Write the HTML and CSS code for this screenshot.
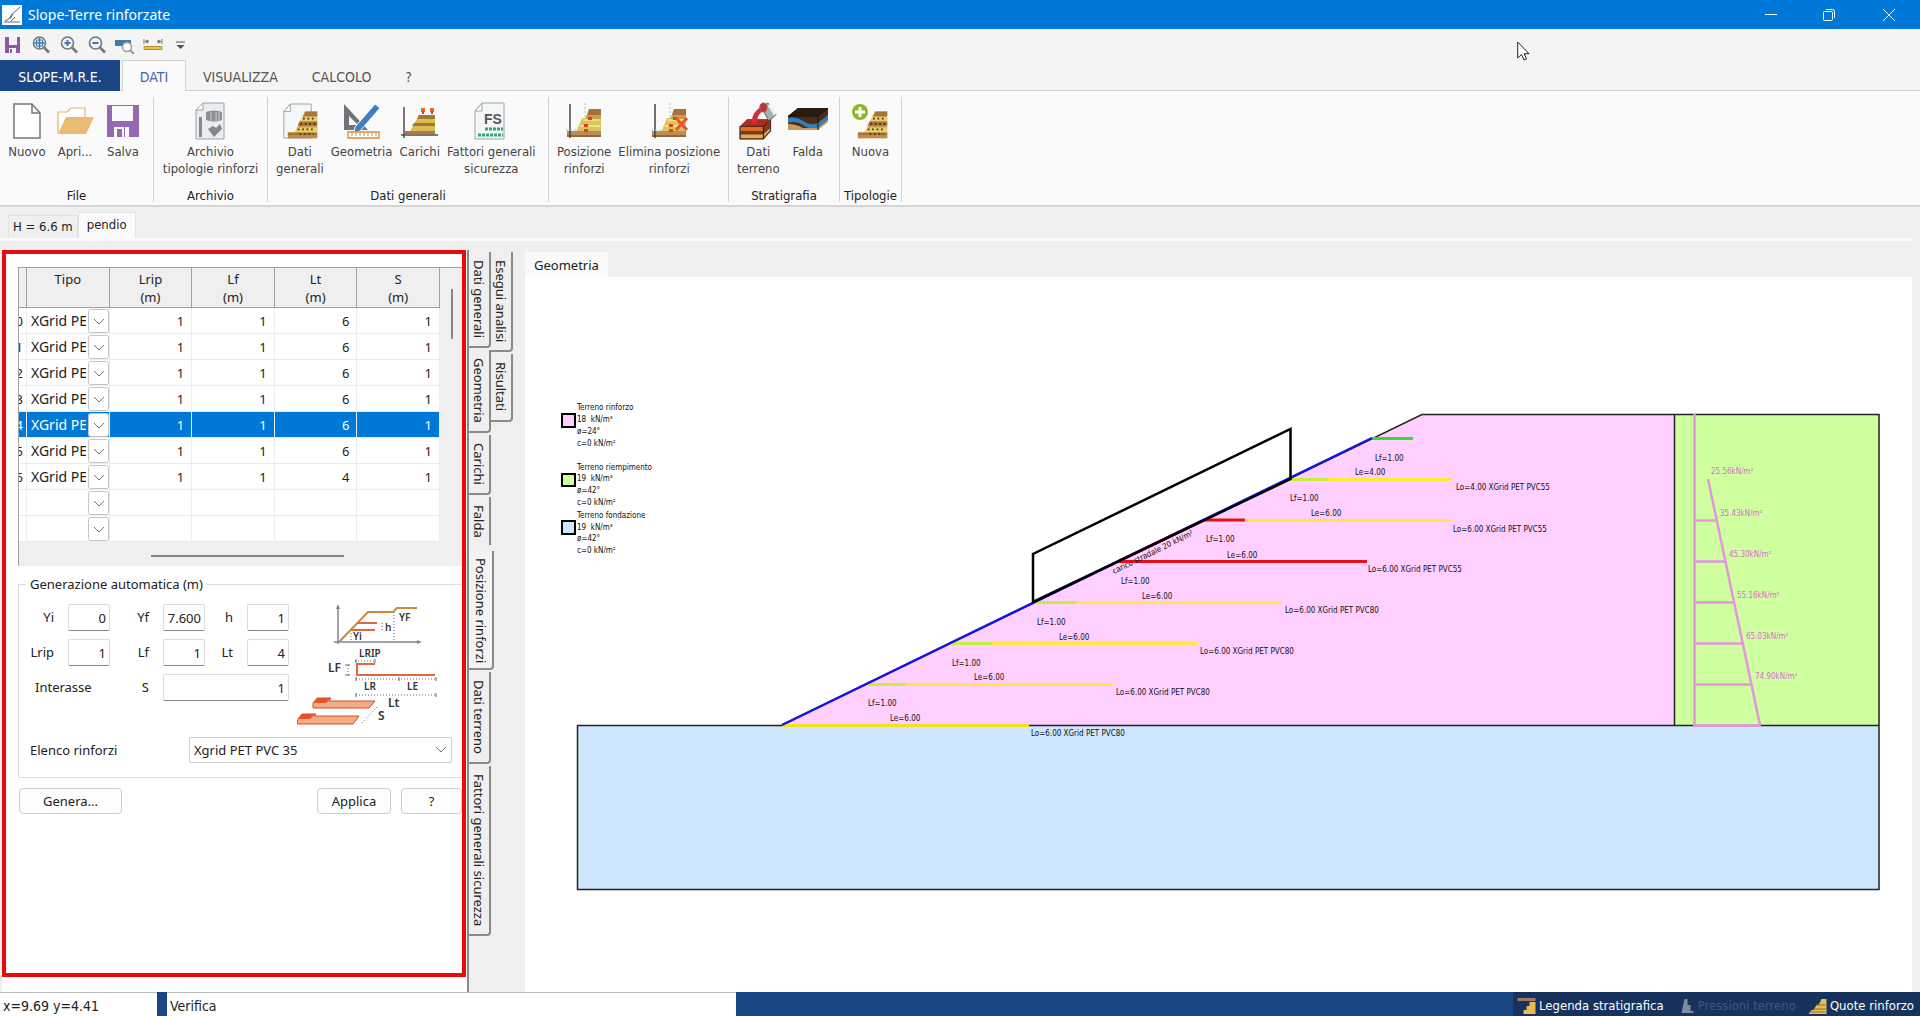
FILE: index.html
```html
<!DOCTYPE html>
<html lang="it">
<head>
<meta charset="utf-8">
<title>Slope-Terre rinforzate</title>
<link rel="stylesheet" href="styles.css">
</head>
<body>
<svg class="defs" aria-hidden="true">
  <symbol id="wall" viewBox="0 0 36 36">
    <path d="M1 27h8l11-23h14v30H1z" fill="#c9a04a"/>
    <path d="M21 4h13v5H19zM14 15h20v5H12zM1 28h33v3H1z" fill="#a5763c"/>
    <path d="M17 10h17v5H15zM11 22h23v5H9z" fill="#e6cf6a"/>
    <path d="M1 31h33v3H1z" fill="#c08a50"/>
    <path d="M18 12h14M15 18h17M12 24h20M14 29h16" stroke="#4a3518" stroke-width="2" stroke-dasharray="2 3"/>
  </symbol>
  <symbol id="axes-wall" viewBox="0 0 38 38">
    <path d="M12 28l5-12h4l3-9h12v23H10z" fill="#dcc45c"/>
    <path d="M24 7h12v6H22z" fill="#a8703e"/>
    <path d="M22 13h14v4H20z" fill="#c9a04a"/>
    <path d="M2 29h34v6H2z" fill="#c08a50"/>
    <path d="M2 34h34" stroke="#5b4a30"/>
    <path d="M5 2v34" stroke="#444" stroke-width="1.5"/>
    <path d="M20 1v14M1 28h35" stroke="#8fc6dc" stroke-dasharray="2 2"/>
    <path d="M15 24h20M18 18h16" stroke="#f0e08a" stroke-width="2"/>
    <path d="M19 22h4v3h-4zM23 15h4v3h-4zM19 27h4v3h-4z" fill="#e0401c"/>
  </symbol>
  <symbol id="page" viewBox="0 0 36 38">
    <path d="M10 1h22v36H3V9z" fill="#f4f7f8" stroke="#9aa4a8"/>
    <path d="M10 1v8H3z" fill="#fff" stroke="#9aa4a8"/>
  </symbol>
  <symbol id="lens" viewBox="0 0 18 18">
    <circle cx="7.500" cy="7" r="6" fill="#eef3f7" stroke="#777" stroke-width="1.600"/>
    <path d="M12 11.500l5 5" stroke="#777" stroke-width="2.600"/>
  </symbol>
</svg>

<header class="titlebar">
  <svg class="app-icon" viewBox="0 0 20 20"><path d="M0 0h20v20H0z" fill="#fff"/><path d="M3 16l4-2 3-5 5-4 3-3M2 17h16M8 14l3-5M13 12l-4 4" fill="none" stroke="#667" stroke-width="1"/></svg>
  <h1>Slope-Terre rinforzate</h1>
  <div class="window-buttons">
    <button aria-label="Riduci"><svg viewBox="0 0 12 12"><path d="M0 5.500h12" stroke="#fff"/></svg></button>
    <button aria-label="Ripristina"><svg viewBox="0 0 12 12"><path d="M.5 3.500q0-1 1-1h7q1 0 1 1v7q0 1-1 1h-7q-1 0-1-1zM3 .5h6.500q2 0 2 2V9" fill="none" stroke="#fff"/></svg></button>
    <button aria-label="Chiudi"><svg viewBox="0 0 12 12"><path d="M0 0l12 12M12 0L0 12" stroke="#fff"/></svg></button>
  </div>
</header>

<div class="quick-bar">
  <button aria-label="Salva"><svg viewBox="0 0 18 18"><path d="M1 1h4v8h8V1h3v16H1z" fill="#8a5aa8"/><path d="M5 12h7v5H5z" fill="#f6f4f8"/><path d="M6 13h2v4H6z" fill="#8a5aa8"/></svg></button>
  <button aria-label="Zoom tutto"><svg viewBox="0 0 18 18"><use href="#lens"/><path d="M7.500 2v10M2.500 7h10" stroke="#3a78b8" stroke-width="1.500"/><path d="M4.500 4h6v6h-6z" fill="none" stroke="#3a78b8"/></svg></button>
  <button aria-label="Zoom avanti"><svg viewBox="0 0 18 18"><use href="#lens"/><path d="M7.500 4v6M4.500 7h6" stroke="#3a78b8" stroke-width="2"/></svg></button>
  <button aria-label="Zoom indietro"><svg viewBox="0 0 18 18"><use href="#lens"/><path d="M4.500 7h6" stroke="#3a78b8" stroke-width="2"/></svg></button>
  <button aria-label="Zoom finestra"><svg viewBox="0 0 20 18"><path d="M0 4h16v6H0z" fill="#3f7cab"/><circle cx="12" cy="11" r="4.500" fill="#fff" stroke="#999" stroke-width="1.500"/><path d="M15 14l4 4" stroke="#999" stroke-width="2"/></svg></button>
  <button aria-label="Misura"><svg viewBox="0 0 20 18"><path d="M1 10.500h18v3H1z" fill="#e8c44a" stroke="#b89030"/><path d="M1 3v5M19 3v5M2 5.500l3-1.500v3zM18 5.500l-3-1.500v3z" stroke="#777" fill="#777"/></svg></button>
  <button aria-label="Personalizza"><svg viewBox="0 0 18 18"><path d="M4 6h9" stroke="#555"/><path d="M4.500 9h8l-4 4z" fill="#555"/></svg></button>
</div>

<nav class="ribbon-tabs">
  <button class="ribbon-tab is-app">SLOPE-M.R.E.</button>
  <button class="ribbon-tab is-active">DATI</button>
  <button class="ribbon-tab">VISUALIZZA</button>
  <button class="ribbon-tab">CALCOLO</button>
  <button class="ribbon-tab">?</button>
</nav>

<section class="ribbon">
  <div class="group group-file">
    <div class="tools">
      <button class="tool"><svg viewBox="0 0 38 38"><path d="M6 2h18l8 9v25H6z" fill="#fff" stroke="#777" stroke-width="1.500"/><path d="M24 2v9h8" fill="none" stroke="#777" stroke-width="1.500"/></svg>Nuovo</button>
      <button class="tool"><svg viewBox="0 0 38 38"><path d="M2 31V10h9l4-4h14v9" fill="#fdfdfd" stroke="#e3b56e" stroke-width="1.200"/><path d="M10 15h28l-8 17H2z" fill="#e8bc74"/></svg>Apri...</button>
      <button class="tool"><svg viewBox="0 0 38 38"><path d="M3 3h32v32H3z" fill="#9668b4"/><path d="M8 4h21v15H8zM10 25h15v10H10z" fill="#fbf9fc"/><path d="M13 27h5v8h-5zM20 25h1v10h-1z" fill="#9668b4"/></svg>Salva</button>
    </div>
    <h2>File</h2>
  </div>
  <div class="group group-archive">
    <div class="tools">
      <button class="tool"><svg viewBox="0 0 38 38"><path d="M11 1h21v36H4V8z" fill="#e9edf0" stroke="#9aa4a8"/><path d="M11 1v7H4z" fill="#fff" stroke="#9aa4a8"/><path d="M7 15h3v20H7z" fill="#888"/><path d="M14 10q8-3 16 0v8q-8 3-16 0z" fill="#8b9095"/><path d="M19 10v9M24 10v9M27 10v9" stroke="#c9ced2"/><path d="M16 27l5-3 3 2 4-4 2 5-8 8z" fill="#83888d"/></svg>Archivio<br>tipologie rinforzi</button>
    </div>
    <h2>Archivio</h2>
  </div>
  <div class="group group-data">
    <div class="tools">
      <button class="tool"><svg viewBox="0 0 38 38"><use href="#page" width="34" height="38"/><use href="#wall" x="6" y="6" width="32" height="32"/></svg>Dati<br>generali</button>
      <button class="tool"><svg viewBox="0 0 38 38"><path d="M1 2l24 26H1z" fill="#707478"/><path d="M6 14l9 9H6z" fill="#fafafa"/><path d="M12 25l20-23 5 4-20 23-6 2z" fill="#3f7fbf" stroke="#fafafa"/><path d="M5 30h31v6H5z" fill="#fff" stroke="#d98a3c" stroke-width="1.300"/><path d="M9 31v3M13 31v3M17 31v3M21 31v3M25 31v3M29 31v3M33 31v3" stroke="#d98a3c"/></svg>Geometria</button>
      <button class="tool"><svg viewBox="0 0 38 38"><path d="M11 26l7-13h16v18H8z" fill="#d9bc52"/><path d="M18 13h16v4H16zM13 21h21v3H11z" fill="#a07a34"/><path d="M4 29h30v3H4z" fill="#b07a48"/><path d="M3 5v31M0 33h37" stroke="#554a40" stroke-width="1.500"/><path d="M20 6h4v4h-4zM29 6h4v4h-4z" fill="#ee6a1c"/><path d="M22 9v3M31 9v3" stroke="#e03a18" stroke-width="2"/></svg>Carichi</button>
      <button class="tool"><svg viewBox="0 0 38 38"><use href="#page" width="36" height="38"/><text x="12" y="22" class="fs-text">FS</text><path d="M13 27h18M6 33h25" stroke="#35a374" stroke-width="3" stroke-dasharray="3 1"/></svg>Fattori generali<br>sicurezza</button>
    </div>
    <h2>Dati generali</h2>
  </div>
  <div class="group group-position">
    <div class="tools">
      <button class="tool"><svg viewBox="0 0 38 38"><use href="#axes-wall"/></svg>Posizione<br>rinforzi</button>
      <button class="tool"><svg viewBox="0 0 38 38"><use href="#axes-wall"/><path d="M26 16l11 12M37 16L26 28" stroke="#f0542c" stroke-width="3"/></svg>Elimina posizione<br>rinforzi</button>
    </div>
  </div>
  <div class="group group-strata">
    <div class="tools">
      <button class="tool"><svg viewBox="0 0 42 42"><path d="M1 27l8-8h26v13l-8 9H1z" fill="#7d3a1c"/><path d="M1 27l8-8h26l-8 8z" fill="#b32a1c"/><path d="M1 27h26v5H1z" fill="#d8702c"/><path d="M2 36h25l7-7v3l-8 8H2z" fill="#dcae5c"/><path d="M1 27h26v14H1zM27 27l8-8v13l-8 9z" fill="none" stroke="#3a1c10"/><path d="M14 24q0-15 14-20l-3 7q-6 5-5 14z" fill="#d23030"/><path d="M25 6l7-5 9 13-8 7z" fill="#a9b0b4" stroke="#555"/><path d="M33 3l7 11" stroke="#f2f2f2" stroke-width="3"/><ellipse cx="27" cy="6" rx="4" ry="5" fill="#c63030" stroke="#777"/></svg>Dati<br>terreno</button>
      <button class="tool"><svg viewBox="0 0 42 38" class="wide"><path d="M1 14l10-8h30v12l-10 8v1H1z" fill="#4a2c18"/><path d="M1 14l10-8h30l-10 8z" fill="#2b1c12"/><path d="M1 16q8-2 15 3t15 2l10-8v5l-10 8q-8 2-15-3T1 21z" fill="#2f80c0"/><path d="M1 22q8 0 15 4h15l10-8v2l-10 8H1z" fill="#c99a5c"/><path d="M1 14h30l10-8M31 14v14" fill="none" stroke="#1c120a"/></svg>Falda</button>
    </div>
    <h2>Stratigrafia</h2>
  </div>
  <div class="group group-types">
    <div class="tools">
      <button class="tool"><svg viewBox="0 0 38 38"><use href="#wall" x="5" y="6" width="32" height="32"/><circle cx="8" cy="10" r="8" fill="#8cb82c"/><path d="M8 5v10M3 10h10" stroke="#fff" stroke-width="3"/></svg>Nuova</button>
    </div>
    <h2>Tipologie</h2>
  </div>
</section>

<nav class="doc-tabs">
  <button class="doc-tab">H = 6.6 m</button>
  <button class="doc-tab is-active">pendio</button>
</nav>

<main class="workspace">
  <section class="side">
    <form class="panel">
      <div class="grid-box">
        <table>
          <colgroup><col class="c-num"><col class="c-val"><col class="c-val"><col class="c-val"><col class="c-val"><col class="c-val"></colgroup>
          <thead><tr><th></th><th>Tipo</th><th>Lrip<br>(m)</th><th>Lf<br>(m)</th><th>Lt<br>(m)</th><th>S<br>(m)</th></tr></thead>
          <tbody>
            <tr><td><div class="num">0</div></td><td><select aria-label="Tipo"><option>XGrid PET PVC80</option></select></td><td>1</td><td>1</td><td>6</td><td>1</td></tr>
            <tr><td><div class="num">1</div></td><td><select aria-label="Tipo"><option>XGrid PET PVC80</option></select></td><td>1</td><td>1</td><td>6</td><td>1</td></tr>
            <tr><td><div class="num">2</div></td><td><select aria-label="Tipo"><option>XGrid PET PVC80</option></select></td><td>1</td><td>1</td><td>6</td><td>1</td></tr>
            <tr><td><div class="num">3</div></td><td><select aria-label="Tipo"><option>XGrid PET PVC80</option></select></td><td>1</td><td>1</td><td>6</td><td>1</td></tr>
            <tr class="is-selected"><td><div class="num">4</div></td><td><select aria-label="Tipo"><option>XGrid PET PVC55</option></select></td><td>1</td><td>1</td><td>6</td><td>1</td></tr>
            <tr><td><div class="num">5</div></td><td><select aria-label="Tipo"><option>XGrid PET PVC55</option></select></td><td>1</td><td>1</td><td>6</td><td>1</td></tr>
            <tr><td><div class="num">6</div></td><td><select aria-label="Tipo"><option>XGrid PET PVC55</option></select></td><td>1</td><td>1</td><td>4</td><td>1</td></tr>
            <tr><td></td><td><select aria-label="Tipo"><option></option></select></td><td></td><td></td><td></td><td></td></tr>
            <tr><td></td><td><select aria-label="Tipo"><option></option></select></td><td></td><td></td><td></td><td></td></tr>
          </tbody>
        </table>
        <div class="scroll-v"></div>
        <div class="scroll-h"></div>
      </div>

      <fieldset>
        <legend>Generazione automatica (m)</legend>
        <div class="generator">
          <div class="fields">
            <label for="yi">Yi</label><input id="yi" value="0">
            <label for="yf">Yf</label><input id="yf" value="7.600">
            <label for="h">h</label><input id="h" value="1">
            <label for="lrip">Lrip</label><input id="lrip" value="1">
            <label for="lf">Lf</label><input id="lf" value="1">
            <label for="lt">Lt</label><input id="lt" value="4">
            <span class="spacing-name">Interasse</span>
            <label for="s">S</label><input id="s" class="spacing-input" value="1">
          </div>
          <svg class="scheme" viewBox="0 0 146 126">
            <g fill="none" stroke="#666"><path d="M41 2v38M37 38h86" stroke="#7d8890" stroke-width="1.500"/><path d="M41 0l-2 5h4zM125 38l-5-2v4z" fill="#7d8890" stroke="none"/><path d="M54 26v12M97 8v30M85 19v9M58 57h19M51 61v10M59 75h80M59 91h80M80 103l-16 17" stroke-dasharray="1 2"/><path d="M59 55v4M78 55v4M59 73v4M102 73v4M139 73v4M59 89v4M139 89v4M48 61h5M48 71h5"/></g>
            <path d="M42 38L71 8h25l4-4h20" fill="none" stroke="#c98a3c" stroke-width="2"/>
            <path d="M60 19h20M54 26h24M78 60H60v11h78" fill="none" stroke="#e0683c" stroke-width="2"/>
            <g class="scheme-text"><text x="56" y="36">Yi</text><text x="102" y="17">YF</text><text x="88" y="27">h</text><text x="62" y="53">LRIP</text><text x="31" y="68" class="big">LF</text><text x="67" y="86">LR</text><text x="110" y="86">LE</text><text x="91" y="103" class="big">Lt</text><text x="81" y="116" class="big">S</text></g>
            <path d="M16 104h56l6-7H32l2-3H20l-4 5z" fill="#f4ab8c" stroke="#d84c1c"/>
            <path d="M0 120h56l6-8H17l2-2H5l-4 5z" fill="#f4ab8c" stroke="#d84c1c"/>
            <path d="M17 99h12l5-5H21zM1 115h12l5-5H5z" fill="#e0552c"/>
          </svg>
        </div>
        <div class="list-row">
          <label for="elenco">Elenco rinforzi</label>
          <select id="elenco" class="list-select"><option>Xgrid PET PVC 35</option></select>
        </div>
      </fieldset>

      <div class="actions">
        <button type="button" class="btn btn-generate">Genera...</button>
        <button type="button" class="btn btn-apply">Applica</button>
        <button type="button" class="btn btn-help">?</button>
      </div>
    </form>
  </section>

  <nav class="side-tabs">
    <div class="tab-column">
      <button class="side-tab">Dati generali</button>
      <button class="side-tab">Geometria</button>
      <button class="side-tab">Carichi</button>
      <button class="side-tab">Falda</button>
      <button class="side-tab is-active">Posizione rinforzi</button>
      <button class="side-tab">Dati terreno</button>
      <button class="side-tab">Fattori generali sicurezza</button>
    </div>
    <div class="tab-column">
      <button class="side-tab">Esegui analisi</button>
      <button class="side-tab">Risultati</button>
    </div>
  </nav>

  <section class="view">
    <div class="view-tabs"><button class="view-tab">Geometria</button></div>
    <div class="canvas">
      <svg class="drawing" viewBox="525 277 1387 715" preserveAspectRatio="xMinYMin meet">
        <path d="M577 725h1302v164H577z" fill="#cfe6ff"/>
        <path d="M782 725L1422 414h252v311z" fill="#ffcfff"/>
        <path d="M1674 414h205v311h-205z" fill="#cfff9f"/>
        <path d="M577.5 725.5h1301.500v164H577.500zM782 725L1422 414.500h457V725M1674.500 414v311" fill="none" stroke="#222" stroke-width="1.500"/>
        <g stroke-width="3" stroke="#ffe640">
          <path d="M782 725.500h247" stroke="#f5e020"/>
          <path d="M868 684.500h245M952 643.500h245M1036 602.500h246M1204 520.500h247M1288 479.500h164"/>
          <path d="M868 684.500h39M952 643.500h40M1036 602.500h40M1290 479.500h39" stroke="#c6ee3a"/>
          <path d="M1119 561.500h248M1119 561l85-41h41" stroke="#e6101c" fill="none"/>
          <path d="M1372 438.500h41" stroke="#2ee02e"/>
        </g>
        <path d="M782 725L1372 438" stroke="#1414e0" stroke-width="2.500"/>
        <path d="M1033 602v-48l257.500-125v50z" fill="none" stroke="#000" stroke-width="2.500"/>
        <g stroke="#e695dc" stroke-width="2.500" fill="none"><path d="M1694.500 414v311M1708 479l52 246M1694 520.500h23M1694 561.500h32M1694 602.500h40M1694 643.500h49M1694 684.500h57M1693 725.500h68"/></g>
        <g class="draw-text">
          <text x="1031" y="736">Lo=6.00 XGrid PET PVC80</text><text x="1116" y="695">Lo=6.00 XGrid PET PVC80</text><text x="1200" y="654">Lo=6.00 XGrid PET PVC80</text><text x="1285" y="613">Lo=6.00 XGrid PET PVC80</text><text x="1368" y="572">Lo=6.00 XGrid PET PVC55</text><text x="1453" y="532">Lo=6.00 XGrid PET PVC55</text><text x="1456" y="490">Lo=4.00 XGrid PET PVC55</text>
          <text x="890" y="721">Le=6.00</text><text x="974" y="680">Le=6.00</text><text x="1059" y="640">Le=6.00</text><text x="1142" y="599">Le=6.00</text><text x="1227" y="558">Le=6.00</text><text x="1311" y="516">Le=6.00</text><text x="1355" y="475">Le=4.00</text>
          <text x="868" y="706">Lf=1.00</text><text x="952" y="666">Lf=1.00</text><text x="1037" y="625">Lf=1.00</text><text x="1121" y="584">Lf=1.00</text><text x="1206" y="542">Lf=1.00</text><text x="1290" y="501">Lf=1.00</text><text x="1375" y="461">Lf=1.00</text>
          <text transform="translate(1114 574) rotate(-26)">carico stradale 20 kN/m²</text>
          <text x="577" y="410">Terreno rinforzo</text><text x="577" y="422">18&#160; kN/m³</text><text x="577" y="434">ø=24°</text><text x="577" y="446">c=0 kN/m²</text>
          <text x="577" y="470">Terreno riempimento</text><text x="577" y="481">19&#160; kN/m³</text><text x="577" y="493">ø=42°</text><text x="577" y="505">c=0 kN/m²</text>
          <text x="577" y="518">Terreno fondazione</text><text x="577" y="530">19&#160; kN/m³</text><text x="577" y="541">ø=42°</text><text x="577" y="553">c=0 kN/m²</text>
        </g>
        <g class="draw-text is-pink">
          <text x="1711" y="474">25.56kN/m²</text><text x="1720" y="516">35.43kN/m²</text><text x="1729" y="557">45.30kN/m²</text><text x="1737" y="598">55.16kN/m²</text><text x="1746" y="639">65.03kN/m²</text><text x="1755" y="679">74.90kN/m²</text>
        </g>
        <g stroke="#000" stroke-width="2"><path d="M562 414h13v13h-13z" fill="#ffcfff"/><path d="M562 474h13v12h-13z" fill="#cfff9f"/><path d="M562 521h13v13h-13z" fill="#cfe6ff"/></g>
      </svg>
    </div>
  </section>
</main>

<footer class="status">
  <output class="coords">x=9.69 y=4.41</output>
  <output class="task">Verifica</output>
  <div class="toggles">
    <button><svg viewBox="0 0 18 18"><path d="M0 1h18v3H0z" fill="#9a7a68"/><path d="M3 17h3v-4h3V9h3V5h6v12z" fill="#e6bc58"/></svg>Legenda stratigrafica</button>
    <button disabled><svg viewBox="0 0 18 18"><path d="M1 16h4L8 2h3v6h3v6h3v2z" fill="#7f8ba0"/></svg>Pressioni terreno</button>
    <button><svg viewBox="0 0 18 18"><path d="M0 17l3-4h2l3-5h2l3-6h5v15z" fill="#e6bc58"/><path d="M5 12h12M8 8h9M2 15h15" stroke="#94682c"/></svg>Quote rinforzo</button>
  </div>
</footer>

<svg class="pointer" viewBox="0 0 13 20"><path d="M.7 1v16l3.800-3.500L7 19l2.500-1-2.300-5.300H12z" fill="#fff" stroke="#222"/></svg>
</body>
</html>
```
FILE: styles.css
```css
* { box-sizing: border-box; }

body {
  margin: 0;
  min-height: 100vh;
  display: flex;
  flex-direction: column;
  background: #efefef;
  color: #222;
  font: 13px/18px "Noto Sans", sans-serif;
}

button, input, select {
  font: inherit;
  color: inherit;
  margin: 0;
  padding: 0;
  border: 0;
  border-radius: 0;
  background: none;
}

h1, h2 { margin: 0; font: inherit; }
svg { display: block; flex: none; }
.defs { position: absolute; width: 0; height: 0; }

/* Title bar */
.titlebar {
  height: 29px;
  display: flex;
  align-items: center;
  gap: 6px;
  padding-left: 2px;
  background: #0078d7;
  color: #fff;
  font-size: 14px;
}
.app-icon { width: 20px; height: 20px; }
.window-buttons { margin-left: auto; display: flex; }
.window-buttons button { width: 58px; height: 28px; display: grid; place-items: center; }
.window-buttons button:last-child { width: 62px; }
.window-buttons svg { width: 12px; height: 12px; }

/* Quick access bar */
.quick-bar {
  height: 31px;
  display: flex;
  align-items: center;
  gap: 8px;
  padding-left: 3px;
  background: #f4f4f4;
}
.quick-bar svg { width: 20px; height: 18px; }

/* Ribbon */
.ribbon-tabs, .ribbon, .status, .doc-tab { font-family: "DejaVu Sans Condensed", "Noto Sans", sans-serif; }
.ribbon-tabs {
  height: 31px;
  display: flex;
  background: #f4f4f4;
  border-bottom: 1px solid #d0d0d0;
  color: #555;
  font-size: 14px;
}
.ribbon-tab { height: 31px; padding: 2px 17px 0; }
.ribbon-tab.is-app { width: 120px; padding: 2px 0 0; margin-right: 2px; background: #1b4686; color: #fff; }
.ribbon-tab.is-active {
  width: 64px;
  padding: 2px 0 0;
  background: #fafafa;
  color: #3f66a8;
  border: 1px solid #d0d0d0;
  border-bottom: 0;
}
.ribbon {
  height: 116px;
  display: flex;
  padding: 6px 0 3px;
  background: #fafafa;
  border-bottom: 2px solid #d4d4d4;
  color: #444;
  line-height: 17px;
}
.group { display: flex; flex-direction: column; padding: 0 8px; border-right: 1px solid #d2d2d2; }
.group h2 { margin-top: auto; line-height: 13px; text-align: center; color: #222; white-space: nowrap; }
.tools { display: flex; gap: 7px; }
.tool { display: flex; flex-direction: column; align-items: center; gap: 2px; padding-top: 4px; white-space: nowrap; }
.tool svg { width: 38px; height: 40px; }
.tool .wide { width: 42px; }
.group-file { width: 154px; }
.group-archive { width: 114px; }
.group-data { width: 281px; }
.group-position { width: 180px; }
.group-strata { width: 111px; }
.group-types { width: 62px; padding: 0; }
.group-file .tools { gap: 10px; }
.group-archive .tools, .group-types .tools { justify-content: center; }
.fs-text { font: bold 14px "Liberation Sans", sans-serif; fill: #555; }

/* Document tabs */
.doc-tabs {
  height: 34px;
  display: flex;
  align-items: flex-end;
  padding-left: 8px;
  margin-right: 8px;
  border-bottom: 3px solid #fafafa;
}
.doc-tab { height: 23px; padding: 0 4px; border: 1px solid #e2e2e2; border-bottom: 0; }
.doc-tab.is-active { height: 26px; padding: 0 8px 2px; background: #fafafa; }

/* Workspace */
.workspace {
  flex: 1;
  display: grid;
  grid-template-columns: 467px 58px 1fr;
}
.side {
  display: flex;
  margin: 9px 0 0 2px;
  padding-bottom: 15px;
  background: #fff;
}
.panel {
  width: 464px;
  padding: 13px 0 0 12px;
  border: 4px solid #ea0a0e;
  background: #fff;
}
.grid-box {
  display: grid;
  grid-template-columns: 421px 1fr;
  background: #efefef;
  border: 1px solid #a0a0a0;
  border-width: 1px 0 0 1px;
}
table { width: 421px; table-layout: fixed; border-collapse: separate; border-spacing: 0; background: #fff; }
.c-num { width: 8px; }
th {
  height: 40px;
  padding: 2px 0 0;
  vertical-align: top;
  font-weight: 400;
  background: #efefef;
  border: 1px solid #a0a0a0;
  border-width: 0 1px 1px 0;
}
td {
  height: 26px;
  padding: 0 7px 0 0;
  text-align: right;
  border: 1px solid #ececec;
  border-width: 0 1px 1px 0;
}
td:first-child, td:nth-child(2) { padding: 0; }
.num { direction: rtl; overflow: hidden; padding-right: 3px; }
td select {
  display: block;
  width: 100%;
  height: 25px;
  padding: 0 23px 0 4px;
  appearance: none;
  font-size: 14px;
  background: url("data:image/svg+xml,%3Csvg xmlns='http://www.w3.org/2000/svg' width='21' height='25'%3E%3Crect x='.5' y='1.500' width='20' height='23' rx='2' fill='%23fff' stroke='%23c4c4c4'/%3E%3Cpath d='M6 11l5 5 5-5' fill='none' stroke='%23777'/%3E%3C/svg%3E") right center no-repeat;
}
.is-selected td { background: #0078d7; color: #fff; }
.scroll-v { width: 2px; height: 50px; margin: 21px 0 0 11px; background: #858585; }
.scroll-h { width: 193px; height: 2px; margin: 13px 0 9px 132px; background: #858585; }

fieldset { margin: 8px 0 0; padding: 10px 0 14px; border: 1px solid #dcdcdc; border-right: 0; min-width: 0; }
legend { margin-left: 7px; padding: 0 4px; line-height: 20px; }
.generator { display: flex; gap: 8px; }
.fields {
  display: grid;
  grid-template-columns: 35px 42px 25px 42px 14px 42px;
  grid-auto-rows: 27px;
  gap: 8px 14px;
  align-items: center;
}
.fields label, .spacing-name { padding-bottom: 2px; }
.fields label { text-align: right; }
.fields input {
  width: 100%;
  height: 27px;
  padding: 0 3px;
  text-align: right;
  background: #fff;
  border: 1px solid #dcdcdc;
  border-bottom-color: #858585;
  border-radius: 2px;
}
.fields .spacing-name { grid-column: span 2; padding-left: 16px; }
.fields .spacing-input { grid-column: span 3; }
.scheme { width: 146px; height: 126px; }
.scheme-text { font: 600 10px "Noto Sans", sans-serif; fill: #333; }
.scheme-text .big { font-size: 12px; }
.list-row { display: flex; align-items: center; justify-content: space-between; margin-top: 7px; padding: 0 10px 0 11px; }
.list-select {
  width: 263px;
  height: 26px;
  padding: 0 24px 0 4px;
  appearance: none;
  border: 1px solid #cfcfcf;
  border-radius: 2px;
  background: #fff url("data:image/svg+xml,%3Csvg xmlns='http://www.w3.org/2000/svg' width='12' height='8'%3E%3Cpath d='M1 1l5 5 5-5' fill='none' stroke='%23777'/%3E%3C/svg%3E") right 4px center no-repeat;
}
.actions { display: flex; gap: 10px; margin: 10px 0 0 1px; }
.btn { height: 26px; border: 1px solid #cfcfcf; border-radius: 4px; background: #fdfdfd; }
.btn-generate { width: 103px; margin-right: auto; }
.btn-apply { width: 74px; }
.btn-help { width: 61px; }

/* Vertical tabs */
.side-tabs { display: flex; align-items: flex-start; border-left: 2px solid #8a8a8a; margin-top: 9px; padding-top: 2px; }
.tab-column { width: 22px; display: flex; flex-direction: column; align-items: flex-start; gap: 2px; }
.side-tab {
  width: 22px;
  padding: 8px 0;
  writing-mode: vertical-rl;
  line-height: 20px;
  border: 2px solid #8a8a8a;
  border-width: 0 2px 2px 0;
  border-bottom-right-radius: 4px;
}
.side-tab:has(+ .is-active) { border-bottom: 0; border-radius: 0; }
.side-tab.is-active { width: 25px; margin-top: 4px; padding: 7px 0 4px; background: #f3f3f3; }

/* Drawing view */
.view { display: flex; flex-direction: column; margin: 11px 8px 0 0; }
.view-tab { height: 25px; padding: 0 9px; background: #fafafa; }
.canvas { flex: 1; background: #fff; }
.drawing { width: 100%; height: auto; }
.draw-text { font: 8px "DejaVu Sans Condensed", "Noto Sans", sans-serif; fill: #111; }
.draw-text.is-pink { fill: #d870cc; }

/* Status bar */
.status { height: 24px; display: flex; background: #1b4686; color: #222; font-size: 14px; }
.coords { width: 157px; padding: 4px 3px 0; background: #fff; border-top: 1px solid #bbb; }
.task { width: 569px; margin-left: 10px; padding: 4px 3px 0; background: #fff; border-top: 1px solid #bbb; }
.toggles { margin-left: auto; display: flex; gap: 12px; padding: 4px 6px 0 4px; background: #17325c; color: #fff; font-size: 13px; }
.toggles button { display: flex; align-items: center; gap: 3px; }
.toggles button:disabled { color: #3d5a87; }
.toggles svg { width: 19px; height: 18px; }

.pointer { position: absolute; left: 79%; top: 41px; width: 13px; height: 20px; }
```
